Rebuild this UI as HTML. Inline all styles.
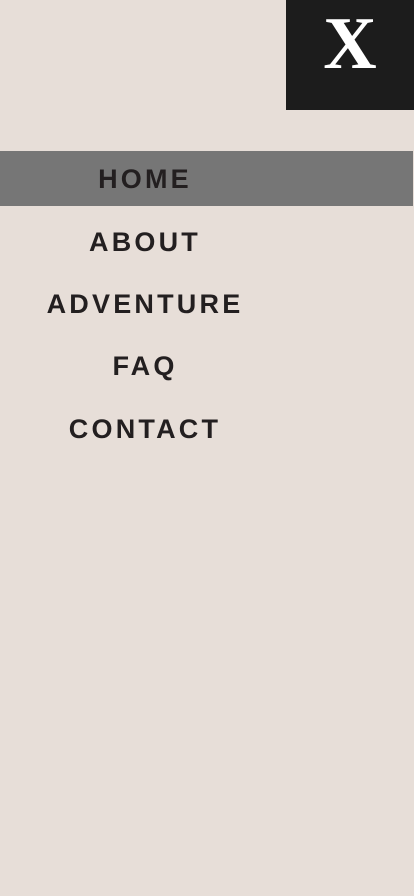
<!DOCTYPE html>
<html><head><style>
html,body{margin:0;padding:0;width:414px;height:896px;background:#e7ded8;overflow:hidden;position:relative;font-family:"Liberation Sans",sans-serif}
.x{position:absolute;left:286px;top:0;width:128px;height:110px;background:#1c1c1c;color:#fff;font-family:"Liberation Serif",serif;font-weight:bold;font-size:74px;text-align:center;line-height:88px}
.bar{position:absolute;left:0;top:151px;width:413px;height:55px;background:#767676}
.n{position:absolute;left:0;width:290px;text-align:center;font-weight:bold;font-size:27px;letter-spacing:3.2px;color:#231f20;line-height:30px}
</style></head><body>
<div class="x">X</div>
<div class="bar"></div>
<div class="n" style="top:164px">HOME</div>
<div class="n" style="top:227px">ABOUT</div>
<div class="n" style="top:289px">ADVENTURE</div>
<div class="n" style="top:351px">FAQ</div>
<div class="n" style="top:414px">CONTACT</div>
</body></html>
